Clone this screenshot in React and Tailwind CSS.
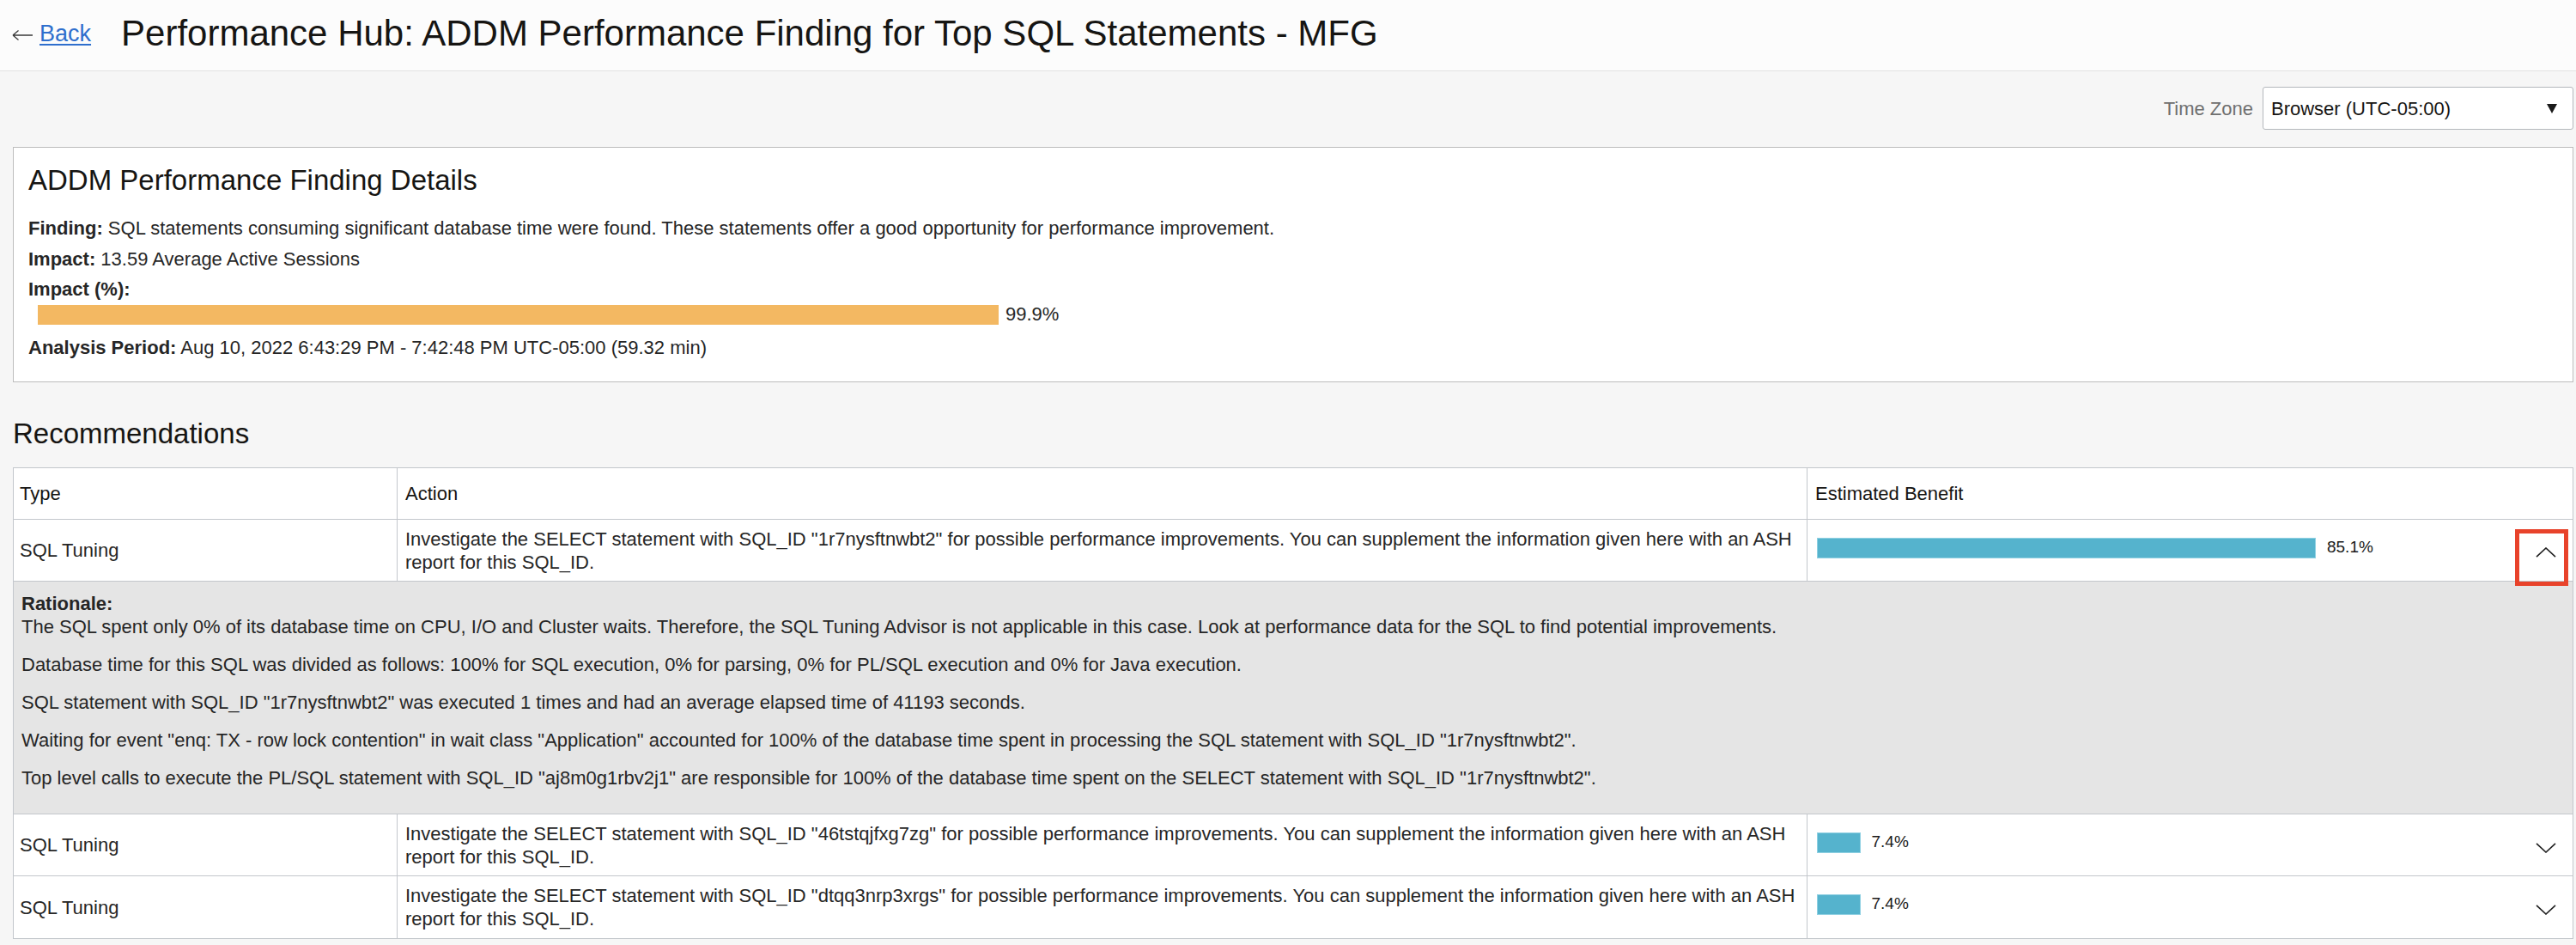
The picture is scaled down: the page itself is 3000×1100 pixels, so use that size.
import React from "react";

const rationale = [
  "The SQL spent only 0% of its database time on CPU, I/O and Cluster waits. Therefore, the SQL Tuning Advisor is not applicable in this case. Look at performance data for the SQL to find potential improvements.",
  "Database time for this SQL was divided as follows: 100% for SQL execution, 0% for parsing, 0% for PL/SQL execution and 0% for Java execution.",
  'SQL statement with SQL_ID "1r7nysftnwbt2" was executed 1 times and had an average elapsed time of 41193 seconds.',
  'Waiting for event "enq: TX - row lock contention" in wait class "Application" accounted for 100% of the database time spent in processing the SQL statement with SQL_ID "1r7nysftnwbt2".',
  'Top level calls to execute the PL/SQL statement with SQL_ID "aj8m0g1rbv2j1" are responsible for 100% of the database time spent on the SELECT statement with SQL_ID "1r7nysftnwbt2".',
];

const rows = [
  { id: "1r7nysftnwbt2", pct: 85.1, expanded: true },
  { id: "46tstqjfxg7zg", pct: 7.4 },
  { id: "dtqq3nrp3xrgs", pct: 7.4 },
];

function Chevron({ up }) {
  return (
    <svg width="24" height="12" viewBox="0 0 24 12" fill="none">
      <path
        d={up ? "M1 11.2 L12 1 L23 11.2" : "M1 0.8 L12 11 L23 0.8"}
        stroke="#1f1f1f"
        strokeWidth="1.6"
      />
    </svg>
  );
}

function Row({ r, last }) {
  return (
    <>
      <div
        className={`grid grid-cols-[446px_1642px_1fr] ${
          last ? "h-[72px]" : "h-[72px] border-b border-[#c3c7cc]"
        }`}
      >
        <div className="flex items-center pl-[7px]">SQL Tuning</div>
        <div className="flex items-center border-l border-[#c3c7cc] pl-[9px] pr-[4px] leading-[27px]">
          <div>
            Investigate the SELECT statement with SQL_ID "{r.id}" for possible
            performance improvements. You can supplement the information given
            here with an ASH
            <br />
            report for this SQL_ID.
          </div>
        </div>
        <div className="relative flex items-start border-l border-[#c3c7cc] pl-[11px] pt-[21px]">
          <div
            className="h-[24px] bg-[#55b3cd] border border-[#8fd0e2]"
            style={{ width: `${r.pct * 6.827}px` }}
          />
          <span className="ml-[13px] text-[19px] leading-[22px] text-[#1a1a1a]">
            {r.pct}%
          </span>
          {r.expanded && (
            <div className="absolute right-[5px] top-[11px] w-[62px] h-[66px] border-[5px] border-[#e8432b]" />
          )}
          <div
            className={`absolute right-[19px] flex ${
              r.expanded ? "top-[32px]" : "top-[33px]"
            }`}
          >
            <Chevron up={r.expanded} />
          </div>
        </div>
      </div>
      {r.expanded && (
        <div className="bg-[#e5e5e5] border-b border-[#c3c7cc] pl-[9px] pt-[12px] pb-[28px] leading-[27px] text-[#262626]">
          <div className="font-bold">Rationale:</div>
          {rationale.map((t, i) => (
            <div key={i} className={i === 0 ? "" : "mt-[17px]"}>
              {t}
            </div>
          ))}
        </div>
      )}
    </>
  );
}

export default function App() {
  return (
    <div className="w-[3000px] min-h-[1100px] bg-[#f6f6f6] font-['Liberation_Sans',Arial,sans-serif] text-[22px] text-[#262626]">
      <header className="h-[83px] bg-[#fcfcfc] border-b border-[#e2e2e2] flex items-center pb-[4px]">
        <a className="ml-[14px] flex items-center text-[27px] leading-[27px] cursor-pointer">
          <svg width="24" height="14" viewBox="0 0 24 14" fill="none" className="mt-[3px]">
            <path d="M1 7 H24 M1 7 L7.5 1.5 M1 7 L7.5 12.5" stroke="#3a3a3a" strokeWidth="1.3" />
          </svg>
          <span className="ml-[8px] text-[#2f6fcd] underline underline-offset-[3px] decoration-[1.5px]">
            Back
          </span>
        </a>
        <h1 className="ml-[35px] text-[42px] leading-[42px] text-[#161513]">
          Performance Hub: ADDM Performance Finding for Top SQL Statements - MFG
        </h1>
      </header>

      <main className="pl-[15px] pr-[3px]">
        <div className="flex justify-end items-center pt-[18px]">
          <span className="text-[#6f6f6f] mr-[11px]">Time Zone</span>
          <div className="w-[362px] h-[50px] bg-white border border-[#b4b8bc] rounded-[3px] flex items-center justify-between pl-[9px] pr-[18px] text-[#161513]">
            <span>Browser (UTC-05:00)</span>
            <svg width="12" height="11" viewBox="0 0 12 11">
              <path d="M0 0 H12 L6 11 Z" fill="#1a1a1a" />
            </svg>
          </div>
        </div>

        <section className="mt-[20px] h-[274px] bg-white border border-[#bdbdbd] pl-[17px] pt-[18px]">
          <h2 className="text-[33px] leading-[40px] text-[#161513]">
            ADDM Performance Finding Details
          </h2>
          <div className="mt-[18px] leading-[36px]">
            <div>
              <span className="font-bold">Finding:</span> SQL statements
              consuming significant database time were found. These statements
              offer a good opportunity for performance improvement.
            </div>
            <div>
              <span className="font-bold">Impact:</span> 13.59 Average Active
              Sessions
            </div>
            <div className="font-bold leading-[34px]">Impact (%):</div>
            <div className="flex items-center h-[24px] ml-[11px]">
              <div className="h-[23px] w-[1119px] bg-[#f3b862]" />
              <span className="ml-[8px] leading-[24px]">99.9%</span>
            </div>
            <div className="mt-[9px]">
              <span className="font-bold">Analysis Period:</span> Aug 10, 2022
              6:43:29 PM - 7:42:48 PM UTC-05:00 (59.32 min)
            </div>
          </div>
        </section>

        <h2 className="mt-[40px] text-[33px] leading-[40px] text-[#161513]">
          Recommendations
        </h2>

        <div className="mt-[19px] bg-white border border-[#c3c7cc]">
          <div className="grid grid-cols-[446px_1642px_1fr] h-[60px] border-b border-[#c3c7cc] text-[#161513]">
            <div className="flex items-center pl-[7px]">Type</div>
            <div className="flex items-center border-l border-[#c3c7cc] pl-[9px]">
              Action
            </div>
            <div className="flex items-center border-l border-[#c3c7cc] pl-[9px]">
              Estimated Benefit
            </div>
          </div>
          {rows.map((r, i) => (
            <Row key={r.id} r={r} last={i === rows.length - 1} />
          ))}
        </div>
      </main>
    </div>
  );
}
